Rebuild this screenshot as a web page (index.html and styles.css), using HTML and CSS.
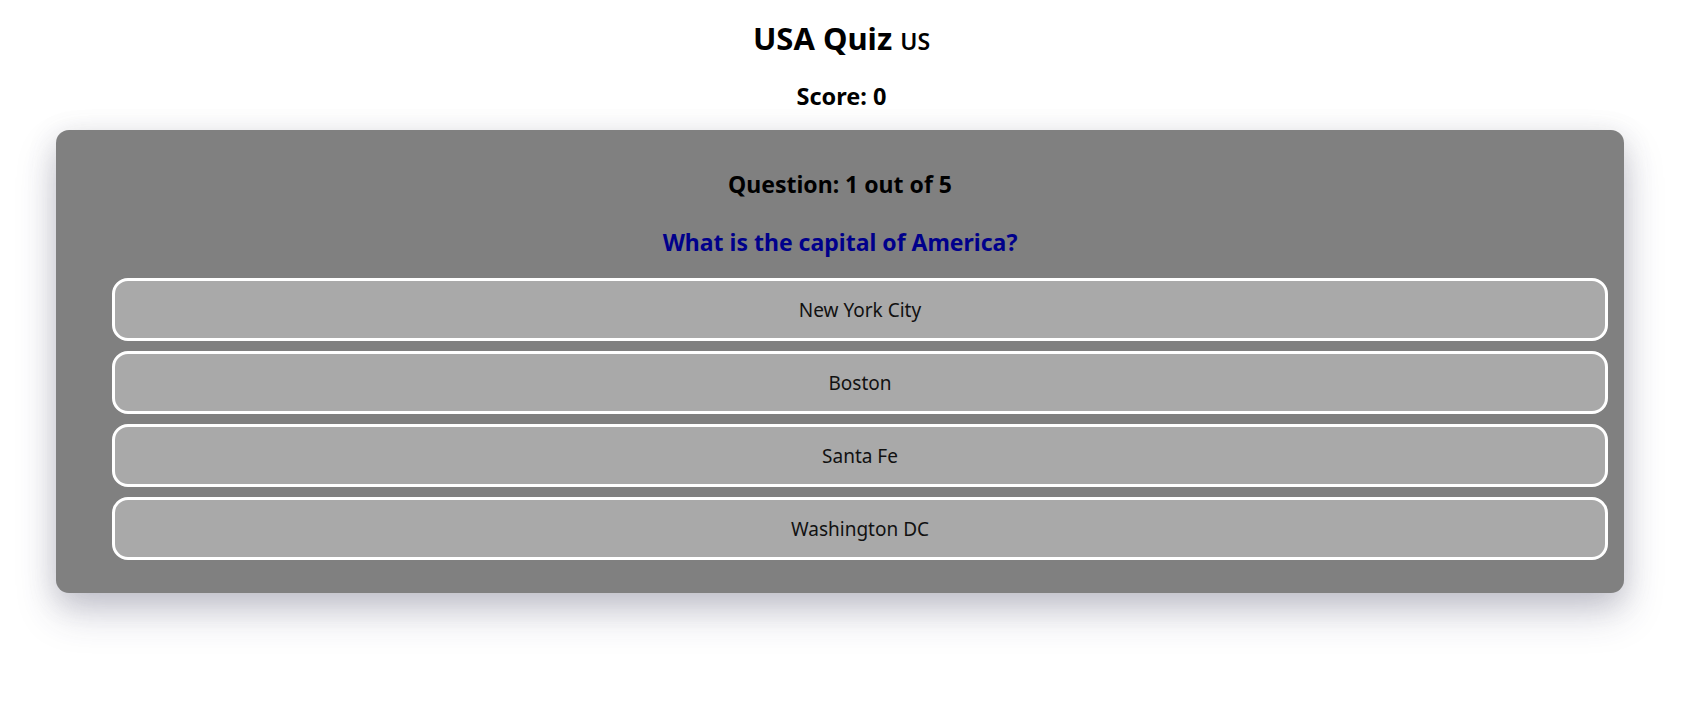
FILE: index.html
```html
<!DOCTYPE html>
<html lang="en">
<head>
<meta charset="utf-8">
<title>USA Quiz</title>
<link rel="stylesheet" href="styles.css">
</head>
<body>
  <header class="header">
    <h1 class="title">USA Quiz <span class="flag">US</span></h1>
    <h2 class="score">Score: 0</h2>
  </header>
  <main class="quiz">
    <h3 class="counter">Question: 1 out of 5</h3>
    <h3 class="question">What is the capital of America?</h3>
    <ul class="answers">
      <li><button class="answer">New York City</button></li>
      <li><button class="answer">Boston</button></li>
      <li><button class="answer">Santa Fe</button></li>
      <li><button class="answer">Washington DC</button></li>
    </ul>
  </main>
</body>
</html>
```

FILE: styles.css
```css
* { box-sizing: border-box; }

html {
  background: #ffffff;
}

body {
  margin: 0;
  padding-bottom: 115px;
  background: #ffffff;
  color: #000000;
  font-family: "Noto Sans", "Open Sans", sans-serif;
}

.header {
  text-align: center;
}

.title {
  margin: 19px 0 0;
  font-size: 31px;
  line-height: 38px;
  font-weight: 700;
}

.flag {
  font-size: 23px;
  font-weight: 600;
  line-height: 1;
}

.score {
  margin: 24px 0 0;
  font-size: 23.5px;
  line-height: 30px;
  font-weight: 700;
}

.quiz {
  margin: 19px 59px 0 56px;
  padding: 16px 16px 33px;
  background: #808080;
  border-radius: 13px;
  box-shadow: 0 20px 40px rgba(50, 50, 93, 0.22), 0 7px 29px rgba(100, 100, 111, 0.2);
  text-align: center;
}

.counter {
  margin: 24px 0 0;
  font-size: 23px;
  line-height: 28px;
  font-weight: 700;
}

.question {
  margin: 30px 0 0;
  font-size: 23px;
  line-height: 28px;
  font-weight: 700;
  color: #00008b;
}

.answers {
  list-style: none;
  margin: 22px 0 0;
  padding: 0 0 0 40px;
  display: flex;
  flex-direction: column;
  gap: 10px;
}

.answer {
  display: block;
  width: 100%;
  height: 63px;
  padding: 0 16px;
  background: #a9a9a9;
  border: 3px solid #ffffff;
  border-radius: 16px;
  font-family: "Noto Sans", "Open Sans", sans-serif;
  font-size: 19px;
  color: #111111;
  cursor: pointer;
}
```
